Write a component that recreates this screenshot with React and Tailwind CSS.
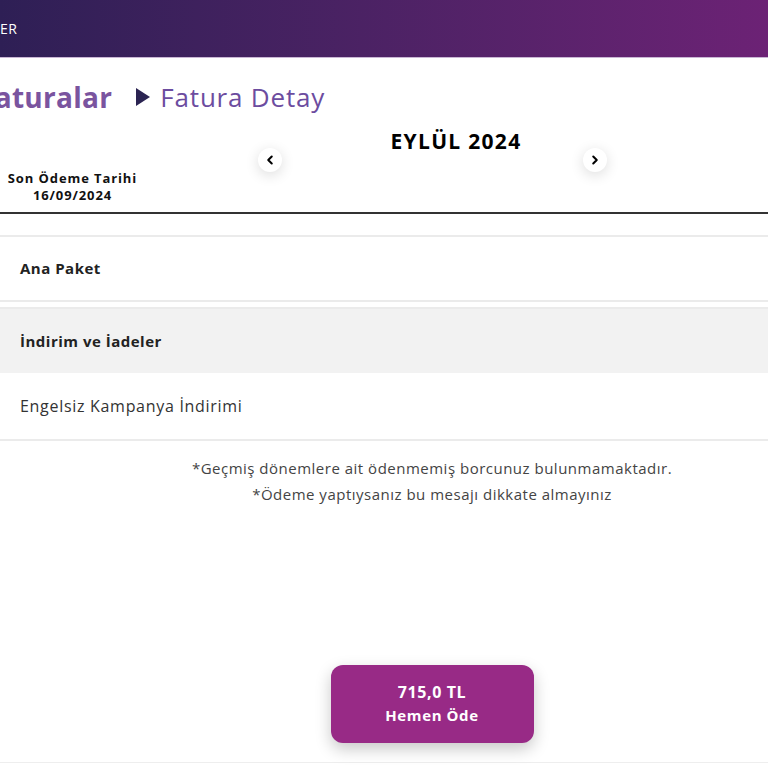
import { ChevronLeft, ChevronRight } from "lucide-react";

const FONT = { fontFamily: '"Open Sans", "Liberation Sans", sans-serif' };

function ArrowButton({ dir }) {
  const Icon = dir === "left" ? ChevronLeft : ChevronRight;
  return (
    <button className="mt-[34px] flex h-6 w-6 shrink-0 items-center justify-center rounded-full bg-white shadow-[0_3px_14px_rgba(0,0,0,0.14)]">
      <Icon size={14} strokeWidth={3.5} className="text-black" />
    </button>
  );
}

export default function App() {
  return (
    <div className="relative h-[768px] w-[768px] overflow-hidden bg-white" style={FONT}>
      {/* Top bar */}
      <header className="flex h-[58px] items-center bg-gradient-to-r from-[#2e1f55] to-[#6c2275] border-b border-[#c9b6d4]">
        <span className="text-[14px] tracking-[0.5px] text-white">ER</span>
      </header>

      <div className="w-[864px]">
        {/* Breadcrumb */}
        <div className="mt-[22px] flex h-[34px] items-center -ml-[21px]">
          <span className="text-[28px] font-bold leading-[34px] tracking-[0.3px] text-[#7a549f]">Faturalar</span>
          <svg width="14" height="18" viewBox="0 0 14 18" className="ml-[24px]">
            <path d="M0 0 L14 9 L0 18 Z" fill="#2b2452" />
          </svg>
          <span className="ml-[10px] text-[26px] leading-[34px] text-[#6c4c9f] tracking-[0.8px]">Fatura Detay</span>
        </div>

        {/* Month navigation */}
        <div className="flex h-[100px] border-b-2 border-[#333]">
          <div className="mt-[56px] w-[145px] text-center text-[13px] font-bold leading-[17px] tracking-[0.9px] text-[#111]">
            <div>Son Ödeme Tarihi</div>
            <div>16/09/2024</div>
          </div>
          <div className="ml-[113px] flex">
            <ArrowButton dir="left" />
            <div className="mt-[13px] w-[301px] pl-[47px] text-center text-[21px] font-bold leading-[28px] tracking-[1.3px] text-black">
              EYLÜL 2024
            </div>
            <ArrowButton dir="right" />
          </div>
        </div>

        {/* Bill items */}
        <div className="mt-[21px] border-y-2 border-[#ebebeb]">
          <div className="flex h-[63px] items-center px-5 text-[15px] font-bold tracking-[0.5px] text-[#222]">Ana Paket</div>
        </div>
        <div className="mt-[5px] border-y-2 border-[#ebebeb]">
          <div className="flex h-[64px] items-center bg-[#f2f2f2] px-5 text-[15px] font-bold tracking-[0.5px] text-[#222]">
            İndirim ve İadeler
          </div>
          <div className="flex h-[66px] items-center px-5 text-[16px] tracking-[0.7px] text-[#333]">Engelsiz Kampanya İndirimi</div>
        </div>

        {/* Notes */}
        <div className="mt-[14px] text-center text-[15px] leading-[26px] tracking-[0.5px] text-[#444]">
          <p>*Geçmiş dönemlere ait ödenmemiş borcunuz bulunmamaktadır.</p>
          <p>*Ödeme yaptıysanız bu mesajı dikkate almayınız</p>
        </div>

        {/* Pay button */}
        <div className="mt-[158px] flex justify-center">
          <button className="flex h-[78px] w-[203px] flex-col items-center justify-center rounded-xl bg-[#982a86] text-white shadow-[0_6px_16px_rgba(0,0,0,0.22)]">
            <span className="text-[16px] font-bold leading-[23px] tracking-[0.6px]">715,0 TL</span>
            <span className="text-[15px] font-bold leading-[23px] tracking-[0.6px]">Hemen Öde</span>
          </button>
        </div>
        <div className="mt-[19px] border-t border-[#eeeeee]" />
      </div>
    </div>
  );
}
